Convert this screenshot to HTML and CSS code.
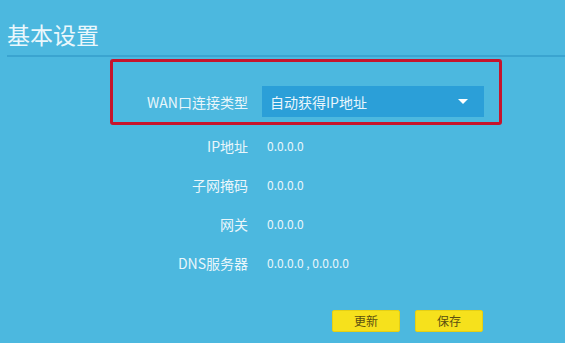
FILE: index.html
```html
<!DOCTYPE html>
<html lang="zh">
<head>
<meta charset="utf-8">
<title>基本设置</title>
<link rel="stylesheet" href="styles.css">
</head>
<body>
<div class="page">
  <header class="header"><h1 class="title">基本设置</h1></header>
  <div class="form">
    <div class="wan-box">
      <div class="row wan-row">
        <span class="label wan-label">WAN口连接类型</span>
        <div class="select">
          <span class="select-text">自动获得IP地址</span>
          <span class="caret"></span>
        </div>
      </div>
    </div>
    <div class="row info-row"><span class="label">IP地址</span><span class="value">0.0.0.0</span></div>
    <div class="row info-row"><span class="label">子网掩码</span><span class="value">0.0.0.0</span></div>
    <div class="row info-row"><span class="label">网关</span><span class="value">0.0.0.0</span></div>
    <div class="row info-row"><span class="label">DNS服务器</span><span class="value">0.0.0.0 , 0.0.0.0</span></div>
    <div class="actions">
      <button class="btn">更新</button>
      <button class="btn">保存</button>
    </div>
  </div>
</div>
</body>
</html>
```
FILE: styles.css
```css
html, body {
  margin: 0;
  padding: 0;
}
body {
  background: #4cb8df;
  width: 565px;
  height: 343px;
  overflow: hidden;
  font-family: "Noto Sans CJK SC", "Noto Sans", sans-serif;
  color: #e9f6fb;
}
.page {
  display: flex;
  flex-direction: column;
}
.header {
  margin-left: 7px;
  padding-top: 18px;
  padding-bottom: 5px;
  border-bottom: 2px solid #3aa4d0;
}
.title {
  margin: 0;
  font-size: 23px;
  font-weight: 400;
  line-height: 32px;
  color: #eaf7fc;
}
.form {
  display: flex;
  flex-direction: column;
  padding-top: 2px;
}
.wan-box {
  margin-left: 110px;
  width: 386px;
  height: 55px;
  border: 3px solid #c6142c;
  border-radius: 3px;
  display: flex;
  align-items: flex-end;
  padding-bottom: 5px;
  box-sizing: content-box;
}
.row {
  display: flex;
  align-items: center;
}
.label {
  width: 248px;
  text-align: right;
  font-size: 14px;
  flex: none;
}
.wan-label {
  width: 135px;
}
.select {
  margin-left: 14px;
  width: 222px;
  height: 31px;
  background: #2b9fd8;
  display: flex;
  align-items: center;
  justify-content: space-between;
  padding: 0 16px 0 8px;
  box-sizing: border-box;
}
.select-text {
  font-size: 14px;
  color: #eaf6fc;
}
.caret {
  width: 0;
  height: 0;
  border-left: 5px solid transparent;
  border-right: 5px solid transparent;
  border-top: 5px solid #ffffff;
}
.info-row {
  height: 39px;
}
.wan-box + .info-row {
  margin-top: 1px;
}
.value {
  margin-left: 19px;
  font-size: 12px;
}
.actions {
  display: flex;
  gap: 15px;
  margin-left: 332px;
  margin-top: 28px;
}
.btn {
  width: 68px;
  height: 22px;
  background: #f6e11c;
  border: 1px solid #e5cf14;
  border-radius: 2px;
  font-family: "Noto Sans CJK SC", "Noto Sans", sans-serif;
  font-size: 12px;
  color: #5a4f10;
  padding: 0;
  line-height: 20px;
}
```
